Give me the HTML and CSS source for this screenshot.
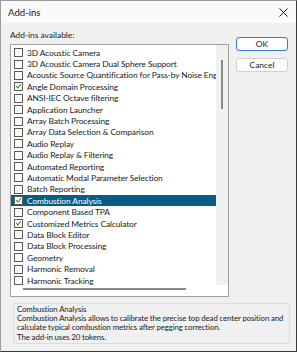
FILE: index.html
```html
<!DOCTYPE html>
<html lang="en">
<head>
  <meta charset="utf-8">
  <title>Add-ins</title>
  <link rel="stylesheet" href="styles.css">
</head>
<body>
  <div class="window">
    <div class="titlebar">
      <span class="titlebar__title">Add-ins</span>
      <svg class="titlebar__close" width="9" height="9" viewBox="0 0 9 9">
        <path d="M0.5 0.5L8.5 8.5M8.5 0.5L0.5 8.5" stroke="#1a1a1a" stroke-width="1"/>
      </svg>
    </div>
    <div class="content">
      <div class="main">
        <div class="main__left">
          <div class="label">Add-ins available:</div>
          <div class="listbox">
            <div class="listbox__body">
              <ul class="list">
                <li class="item"><span class="check"></span>3D Acoustic Camera</li>
                <li class="item"><span class="check"></span>3D Acoustic Camera Dual Sphere Support</li>
                <li class="item"><span class="check"></span>Acoustic Source Quantification for Pass-by Noise Engine</li>
                <li class="item"><span class="check check--on"></span>Angle Domain Processing</li>
                <li class="item"><span class="check"></span>ANSI-IEC Octave filtering</li>
                <li class="item"><span class="check"></span>Application Launcher</li>
                <li class="item"><span class="check"></span>Array Batch Processing</li>
                <li class="item"><span class="check"></span>Array Data Selection &amp; Comparison</li>
                <li class="item"><span class="check"></span>Audio Replay</li>
                <li class="item"><span class="check"></span>Audio Replay &amp; Filtering</li>
                <li class="item"><span class="check"></span>Automated Reporting</li>
                <li class="item"><span class="check"></span>Automatic Modal Parameter Selection</li>
                <li class="item"><span class="check"></span>Batch Reporting</li>
                <li class="item item--selected"><span class="check check--on"></span>Combustion Analysis</li>
                <li class="item"><span class="check"></span>Component Based TPA</li>
                <li class="item"><span class="check check--on"></span>Customized Metrics Calculator</li>
                <li class="item"><span class="check"></span>Data Block Editor</li>
                <li class="item"><span class="check"></span>Data Block Processing</li>
                <li class="item"><span class="check"></span>Geometry</li>
                <li class="item"><span class="check"></span>Harmonic Removal</li>
                <li class="item"><span class="check"></span>Harmonic Tracking</li>
              </ul>
              <div class="vscroll"><div class="vscroll__thumb"></div></div>
            </div>
            <div class="hscroll"><div class="hscroll__thumb"></div></div>
          </div>
        </div>
        <div class="main__buttons">
          <button class="button button--default">OK</button>
          <button class="button">Cancel</button>
        </div>
      </div>
      <div class="desc">
        <div class="desc__title">Combustion Analysis</div>
        <p class="desc__text">Combustion Analysis allows to calibrate the precise top dead center position and calculate typical combustion metrics after pegging correction.</p>
        <p class="desc__text">The add-in uses 20 tokens.</p>
      </div>
    </div>
  </div>
</body>
</html>
```

FILE: styles.css
```css
*, *::before, *::after {
  margin: 0;
  padding: 0;
  box-sizing: border-box;
}

html {
  color: #1a1a1a;
  font-size: 8.4px;
  font-family: "Lato", "Noto Sans", sans-serif;
}

body {
  background-color: #ffffff;
}

.window {
  width: 297px;
  height: 352px;
  border: 1px solid #3a3a3a;
  border-top-color: #9a9a9a;
  border-left-color: #9a9a9a;
  background-color: #f0f0f0;
  display: flex;
  flex-direction: column;
}

.titlebar {
  height: 22px;
  padding: 0 8px 0 7px;
  display: flex;
  align-items: center;
  justify-content: space-between;
  background-color: #f9f9f9;
}

.titlebar__title {
  font-size: 9.6px;
}

.content {
  flex: 1;
  padding: 5px 7px 0 9px;
}

.main {
  display: flex;
  gap: 7px;
}

.main__left {
  width: 219px;
}

.label {
  height: 16px;
  line-height: 14px;
}

.listbox {
  height: 253px;
  border: 1px solid #a0a0a0;
  background-color: #ffffff;
  display: flex;
  flex-direction: column;
}

.listbox__body {
  flex: 1;
  display: flex;
  overflow: hidden;
}

.list {
  flex: 1;
  list-style: none;
  padding-top: 2px;
  overflow: hidden;
}

.item {
  height: 11.4px;
  padding-left: 3px;
  display: flex;
  align-items: center;
  gap: 4px;
  white-space: nowrap;
  letter-spacing: -0.1px;
  overflow: hidden;
}

.item--selected {
  background-color: #085c86;
  color: #ffffff;
}

.check {
  flex: none;
  position: relative;
  width: 9px;
  height: 9px;
  border: 1px solid #5a5a5a;
  background-color: #ffffff;
}

.check--on::after {
  content: "";
  position: absolute;
  left: 2px;
  top: 0;
  width: 2.5px;
  height: 5px;
  border-right: 1.3px solid #1f8f1f;
  border-bottom: 1.3px solid #1f8f1f;
  transform: rotate(40deg);
}

.vscroll {
  width: 12px;
  background-color: #f0f0f0;
  padding-top: 15px;
  display: flex;
  justify-content: center;
}

.vscroll__thumb {
  width: 2px;
  height: 49px;
  background-color: #8a8a8a;
}

.hscroll {
  height: 11px;
  padding: 3px 0 0 12px;
  background-color: #ffffff;
}

.hscroll__thumb {
  width: 163px;
  height: 2px;
  background-color: #8a8a8a;
}

.main__buttons {
  padding-top: 9px;
  display: flex;
  flex-direction: column;
  gap: 7px;
}

.button {
  width: 52px;
  height: 14px;
  border: 1px solid #d0d0d0;
  border-radius: 3px;
  background-color: #fdfdfd;
  color: #1a1a1a;
  font-family: inherit;
  font-size: 8.4px;
}

.button--default {
  border-color: #2f7dd0;
}

.desc {
  margin: 6px 0 0 3px;
  width: 277px;
  height: 41px;
  border: 1px solid #dcdcdc;
  padding: 1px 3px 0;
  font-size: 7.8px;
  letter-spacing: -0.1px;
  line-height: 9.2px;
}
```
